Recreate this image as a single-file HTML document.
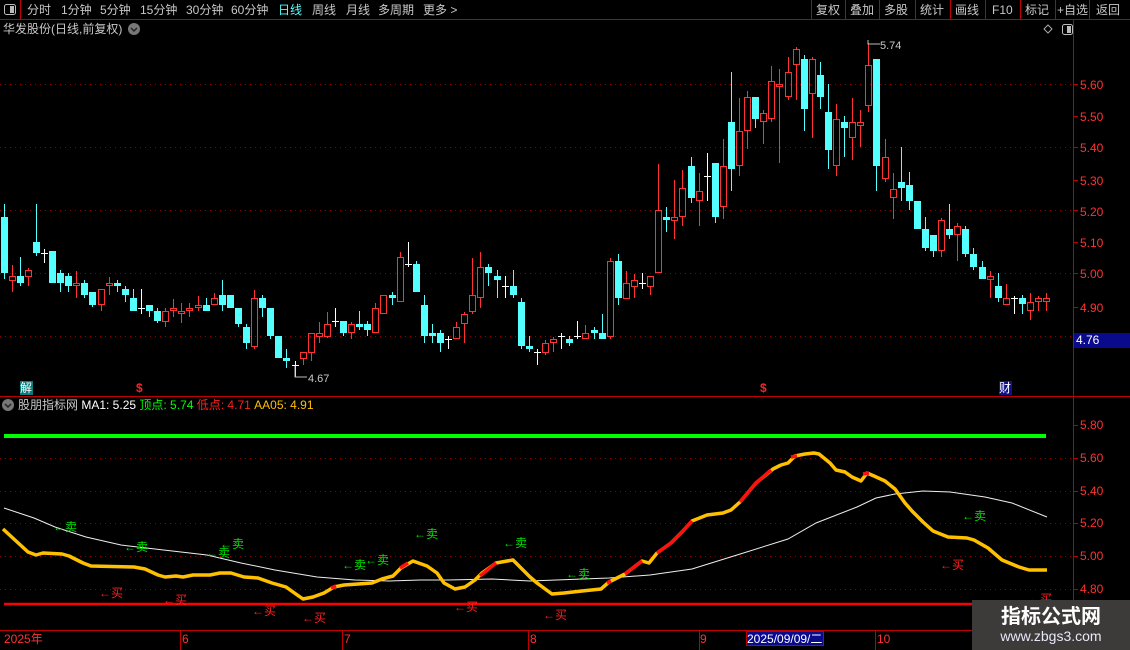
<!DOCTYPE html>
<html><head><meta charset="utf-8"><style>
*{margin:0;padding:0;box-sizing:border-box}
body{width:1130px;height:650px;background:#000;overflow:hidden;position:relative;font-family:"Liberation Sans","Noto Sans CJK SC",sans-serif;color:#c8c8c8}
.t{position:absolute;white-space:nowrap;font-size:12px;line-height:14px}
.a{color:#ff3232;font-size:12px;left:1080px}
svg{position:absolute;left:0;top:0}
</style></head><body>
<svg id="s" width="1130" height="650" xmlns="http://www.w3.org/2000/svg">
<g stroke="#8c0000" stroke-dasharray="1,4" stroke-width="1">
<line x1="0" y1="84.5" x2="1073" y2="84.5"/><line x1="0" y1="147.5" x2="1073" y2="147.5"/><line x1="0" y1="210.5" x2="1073" y2="210.5"/><line x1="0" y1="273.5" x2="1073" y2="273.5"/><line x1="0" y1="336.5" x2="1073" y2="336.5"/>
<line x1="0" y1="458.5" x2="1073" y2="458.5"/><line x1="0" y1="491.5" x2="1073" y2="491.5"/><line x1="0" y1="523.5" x2="1073" y2="523.5"/><line x1="0" y1="556.5" x2="1073" y2="556.5"/><line x1="0" y1="589.5" x2="1073" y2="589.5"/>
</g>
<g stroke="#c00000" stroke-width="1">
<line x1="0" y1="19.5" x2="1130" y2="19.5"/>
<line x1="0" y1="396.5" x2="1130" y2="396.5"/>
<line x1="0" y1="630.5" x2="1130" y2="630.5"/>
<line x1="1073.5" y1="20" x2="1073.5" y2="650"/>
<line x1="20.5" y1="0" x2="20.5" y2="19"/>
<line x1="811.5" y1="0" x2="811.5" y2="19"/><line x1="845.5" y1="0" x2="845.5" y2="19"/><line x1="879.5" y1="0" x2="879.5" y2="19"/><line x1="915.5" y1="0" x2="915.5" y2="19"/><line x1="950.5" y1="0" x2="950.5" y2="19"/><line x1="985.5" y1="0" x2="985.5" y2="19"/><line x1="1020.5" y1="0" x2="1020.5" y2="19"/><line x1="1055.5" y1="0" x2="1055.5" y2="19"/><line x1="1089.5" y1="0" x2="1089.5" y2="19"/>
<line x1="1073" y1="84.5" x2="1078" y2="84.5"/><line x1="1073" y1="116.5" x2="1078" y2="116.5"/><line x1="1073" y1="147.5" x2="1078" y2="147.5"/><line x1="1073" y1="180.5" x2="1078" y2="180.5"/><line x1="1073" y1="210.5" x2="1078" y2="210.5"/><line x1="1073" y1="242.5" x2="1078" y2="242.5"/><line x1="1073" y1="273.5" x2="1078" y2="273.5"/><line x1="1073" y1="307.5" x2="1078" y2="307.5"/>
<line x1="1073" y1="425.5" x2="1078" y2="425.5"/><line x1="1073" y1="458.5" x2="1078" y2="458.5"/><line x1="1073" y1="491.5" x2="1078" y2="491.5"/><line x1="1073" y1="523.5" x2="1078" y2="523.5"/><line x1="1073" y1="556.5" x2="1078" y2="556.5"/><line x1="1073" y1="589.5" x2="1078" y2="589.5"/>
<line x1="180.5" y1="630" x2="180.5" y2="650"/><line x1="342.5" y1="630" x2="342.5" y2="650"/><line x1="528.5" y1="630" x2="528.5" y2="650"/><line x1="699.5" y1="630" x2="699.5" y2="650"/><line x1="875.5" y1="630" x2="875.5" y2="650"/>
</g>
<rect x="4.5" y="4.5" width="11" height="10" rx="2" fill="none" stroke="#bbb"/><rect x="10" y="6" width="4" height="7" fill="#bbb"/>
<rect x="1062.5" y="24.5" width="10" height="10" rx="2" fill="none" stroke="#bbb"/><rect x="1067" y="26" width="4" height="7" fill="#bbb"/>
<path d="M1048 25 L1052 29 L1048 33 L1044 29 Z" fill="none" stroke="#aaa"/>
<circle cx="134" cy="29" r="6" fill="#777"/><path d="M131 28 L134 31 L137 28" stroke="#222" stroke-width="1.5" fill="none"/>
<circle cx="8" cy="405" r="6" fill="#777"/><path d="M5 404 L8 407 L11 404" stroke="#222" stroke-width="1.5" fill="none"/>
<g id="cd"></g>
<line x1="4" y1="436" x2="1046" y2="436" stroke="#00ff00" stroke-width="4"/>
<line x1="4" y1="604" x2="1073" y2="604" stroke="#ff0000" stroke-width="2.5"/>
<polyline fill="none" stroke="#eee" stroke-width="1" points="4,508 34,518 55,527 86,537 121,545 155,549 207,555 241,563 275,570 317,577 355,580 389,581 420,580 448,580 492,579 530,581 609,578 650,575 692,569 737,555 788,539 816,523 857,507 876,498 895,494 923,491 950,492 985,497 1012,503 1047,517"/>
<polyline fill="none" stroke="#ffc000" stroke-width="3.5" stroke-linejoin="round" points="3,529 28,552 36,555 43,553 62,554 69,556 83,563 91,566 134,567 145,569 158,575 165,577 176,576 183,577 193,575 210,575 220,573 231,573 244,577 258,578 272,583 286,587 293,592 303,599 313,597 324,593 334,587 344,585 372,583 382,579 393,576 401,568 413,561 427,566 437,573 444,583 455,589 465,587 475,580 482,573 496,563 513,560 523,570 530,577 537,583 552,594 564,593 582,591 601,589 609,582 625,574 642,561 649,563 657,553 671,543 682,532 692,521 707,515 723,513 731,510 740,502 756,483 773,469 781,465 788,463 795,456 805,454 814,453 819,454 830,463 836,470 845,472 852,477 861,481 867,473 874,476 885,481 895,489 905,503 912,511 923,522 933,531 948,537 967,538 974,540 988,548 1002,560 1019,567 1029,570 1047,570"/>
<g fill="none" stroke="#ff1010" stroke-width="3.5">
<polyline points="331,588 336,586"/><polyline points="400,568 408,563"/><polyline points="480,576 496,563"/>
<polyline points="607,583 611,581"/><polyline points="625,574 642,561"/><polyline points="657,553 671,543 682,532 692,521"/><polyline points="740,502 756,483 771,470"/><polyline points="791,457 797,456"/><polyline points="863,474 869,473"/>
</g>
</svg>
<div class="t" style="left:27px;top:3px">分时</div><div class="t" style="left:61px;top:3px">1分钟</div><div class="t" style="left:100px;top:3px">5分钟</div><div class="t" style="left:140px;top:3px">15分钟</div><div class="t" style="left:186px;top:3px">30分钟</div><div class="t" style="left:231px;top:3px">60分钟</div><div class="t" style="left:278px;top:3px;color:#54ffff">日线</div><div class="t" style="left:312px;top:3px">周线</div><div class="t" style="left:346px;top:3px">月线</div><div class="t" style="left:378px;top:3px">多周期</div><div class="t" style="left:423px;top:3px">更多 &gt;</div>
<div class="t" style="left:816px;top:3px">复权</div><div class="t" style="left:850px;top:3px">叠加</div><div class="t" style="left:884px;top:3px">多股</div><div class="t" style="left:920px;top:3px">统计</div><div class="t" style="left:955px;top:3px">画线</div><div class="t" style="left:992px;top:3px">F10</div><div class="t" style="left:1025px;top:3px">标记</div><div class="t" style="left:1057px;top:3px">+自选</div><div class="t" style="left:1096px;top:3px">返回</div>
<div class="t" style="left:3px;top:22px">华发股份(日线,前复权)</div>
<div class="t" style="left:880px;top:39px;font-size:11px">5.74</div>
<div class="t" style="left:308px;top:372px;font-size:11px">4.67</div>
<svg width="1130" height="650" style="pointer-events:none"><path d="M868 40 V44 H880 M295 366 V377 H307" stroke="#bbb" fill="none"/></svg>
<div class="t a" style="top:78px">5.60</div><div class="t a" style="top:110px">5.50</div><div class="t a" style="top:141px">5.40</div><div class="t a" style="top:174px">5.30</div><div class="t a" style="top:205px">5.20</div><div class="t a" style="top:236px">5.10</div><div class="t a" style="top:267px">5.00</div><div class="t a" style="top:301px">4.90</div>
<div class="t" style="left:1074px;top:333px;width:56px;height:15px;background:#0a0a8c;color:#fff;font-size:12px;padding-left:2px">4.76</div>
<div class="t a" style="top:418px">5.80</div><div class="t a" style="top:451px">5.60</div><div class="t a" style="top:484px">5.40</div><div class="t a" style="top:516px">5.20</div><div class="t a" style="top:549px">5.00</div><div class="t a" style="top:582px">4.80</div>
<div class="t" style="left:20px;top:381px;width:13px;height:14px;background:#0a7a7a;color:#fff;font-size:12px">解</div>
<div class="t" style="left:136px;top:381px;color:#ff2020;font-size:12px;font-weight:bold">$</div>
<div class="t" style="left:760px;top:381px;color:#ff2020;font-size:12px;font-weight:bold">$</div>
<div class="t" style="left:999px;top:381px;width:13px;height:14px;background:#10108c;color:#fff;font-size:12px">财</div>
<div class="t" style="left:18px;top:398px">股朋指标网 <span style="color:#fff">MA1: 5.25</span> <span style="color:#00ff00">顶点: 5.74</span> <span style="color:#ff2020">低点: 4.71</span> <span style="color:#ffc000">AA05: 4.91</span></div>
<div id="sig"></div>
<div class="t" style="left:4px;top:632px;color:#ff3232">2025年</div><div class="t" style="left:182px;top:632px;color:#ff3232">6</div><div class="t" style="left:344px;top:632px;color:#ff3232">7</div><div class="t" style="left:530px;top:632px;color:#ff3232">8</div><div class="t" style="left:700px;top:632px;color:#ff3232">9</div>
<div class="t" style="left:746px;top:631px;width:78px;height:15px;background:#0a0a8c;color:#fff;border:1px solid #c00000;font-size:12px">2025/09/09/二</div>
<div class="t" style="left:877px;top:632px;color:#ff3232">10</div>
<div style="position:absolute;left:972px;top:600px;width:158px;height:50px;background:#3d3a3a">
<div style="position:absolute;left:0;width:158px;top:3px;text-align:center;color:#fff;font-size:20px;font-weight:bold;line-height:24px;font-family:'Noto Sans CJK SC',sans-serif">指标公式网</div>
<div style="position:absolute;left:0;width:158px;top:27px;text-align:center;color:#e8e8f8;font-size:14px;line-height:18px">www.zbgs3.com</div>
</div>
<script>
var D="c4,217,273,204,279 r12,276,281,265,292 c20,276,283,257,286 r28,270,277,268,286 c36,242,253,204,256 w44,253,253,249,263 c52,251,283,251,283 c60,273,283,270,292 c68,276,286,273,292 r76,283,286,271,298 c84,283,295,280,298 c92,292,305,292,307 r101,289,305,289,311 r109,283,286,277,295 c117,283,286,280,292 c125,289,295,286,302 c133,298,311,289,311 w141,308,308,289,314 c149,305,311,305,317 c157,311,321,308,323 r165,311,322,308,327 r173,308,311,299,317 r181,311,314,303,323 r189,308,311,303,317 r198,305,308,296,311 c206,305,311,298,311 r214,298,305,293,305 c222,295,305,280,311 c230,295,308,295,308 c238,308,324,308,327 c246,327,343,324,349 r254,298,347,290,349 c262,298,308,295,317 c270,308,336,308,339 c278,336,358,336,358 c286,358,361,349,368 w295,365,365,361,377 r303,352,359,352,365 r311,333,353,333,361 r319,333,337,322,343 r327,324,337,312,338 w335,321,321,308,327 c343,321,333,321,336 r351,324,333,322,339 c359,324,327,311,330 c367,324,330,321,336 r375,308,333,303,333 r383,295,314,295,314 c392,295,298,292,305 r400,257,302,252,302 w408,264,264,242,267 c416,264,292,261,292 c424,305,336,295,343 c432,333,336,324,343 c440,333,343,330,352 w448,339,339,336,349 r456,327,339,322,339 r464,314,324,312,343 r472,295,312,258,314 r480,267,298,252,308 c488,267,273,264,286 c497,276,280,270,298 w505,286,286,276,298 c513,286,295,270,298 c521,302,346,298,349 c529,346,349,336,352 w537,352,352,349,365 r545,343,353,340,355 r553,339,343,337,352 w561,336,336,333,349 c569,339,343,336,346 w577,336,336,321,339 r585,333,339,325,339 c594,330,333,327,339 c602,333,339,314,339 r610,261,337,258,339 c618,261,298,254,305 r626,283,299,271,299 r634,280,287,274,298 w642,283,283,273,289 r650,276,287,276,295 r658,210,273,164,273 c666,217,220,207,232 r674,217,221,180,239 r682,188,217,170,226 c691,166,198,157,203 r699,191,201,173,226 w707,176,176,153,201 c715,163,217,163,223 r723,166,207,139,219 c731,122,169,72,191 r739,131,166,98,176 r747,97,131,91,149 c755,97,119,97,128 r763,113,122,110,144 r771,81,119,66,122 r779,84,87,69,163 r788,72,97,57,100 r796,49,65,47,100 c804,59,109,55,131 r812,59,94,57,138 c820,75,97,62,109 c828,112,150,84,169 r836,119,166,104,176 c844,122,128,116,157 r852,122,138,98,160 r860,122,126,110,147 r868,65,106,43,112 c876,59,166,59,191 r885,157,179,139,182 r893,189,198,173,219 c901,182,188,147,201 c909,185,201,172,210 c917,201,229,201,229 c925,229,248,217,251 c933,235,251,235,257 r941,220,251,218,257 c949,229,235,204,239 r957,226,235,223,261 c965,229,254,226,257 c973,254,267,248,270 c982,267,279,261,279 r990,276,280,271,298 c998,286,298,273,302 r1006,298,305,284,305 w1014,298,298,296,314 c1022,298,304,295,314 r1030,302,311,293,320 r1038,298,302,296,311 r1046,298,302,293,311";
var h="";D.split(" ").forEach(function(s){var t=s[0],a=s.slice(1).split(",").map(Number),x=a[0],b1=a[1],b2=a[2],w1=a[3],w2=a[4];
if(t=="c"){h+='<line x1="'+(x+.5)+'" y1="'+w1+'" x2="'+(x+.5)+'" y2="'+w2+'" stroke="#54ffff"/><rect x="'+(x-3)+'" y="'+b1+'" width="7" height="'+Math.max(2,b2-b1)+'" fill="#54ffff"/>';}
else if(t=="r"){h+='<line x1="'+(x+.5)+'" y1="'+w1+'" x2="'+(x+.5)+'" y2="'+b1+'" stroke="#ff3232"/><line x1="'+(x+.5)+'" y1="'+b2+'" x2="'+(x+.5)+'" y2="'+w2+'" stroke="#ff3232"/><rect x="'+(x-2.5)+'" y="'+(b1+.5)+'" width="6" height="'+Math.max(2,b2-b1-1)+'" fill="none" stroke="#ff3232"/>';}
else{h+='<line x1="'+(x+.5)+'" y1="'+w1+'" x2="'+(x+.5)+'" y2="'+w2+'" stroke="#fff"/><line x1="'+(x-3)+'" y1="'+(b1+.5)+'" x2="'+(x+4)+'" y2="'+(b1+.5)+'" stroke="#fff"/>';}});
document.getElementById("cd").innerHTML=h;
var S=[["g",53,520],["g",124,540],["g",206,546],["g",220,537],["g",342,558],["g",365,553],["g",414,527],["g",503,536],["g",566,567],["g",962,509],["r",99,586],["r",163,593],["r",252,604],["r",302,611],["r",454,600],["r",543,608],["r",940,558],["r",1028,592]];
var q="";S.forEach(function(s){q+='<div class="t" style="left:'+s[1]+'px;top:'+s[2]+'px;font-size:12px;color:'+(s[0]=="g"?"#00e000":"#ff2020")+'">&larr;'+(s[0]=="g"?"卖":"买")+'</div>';});
document.getElementById("sig").innerHTML=q;
</script>
</body></html>
